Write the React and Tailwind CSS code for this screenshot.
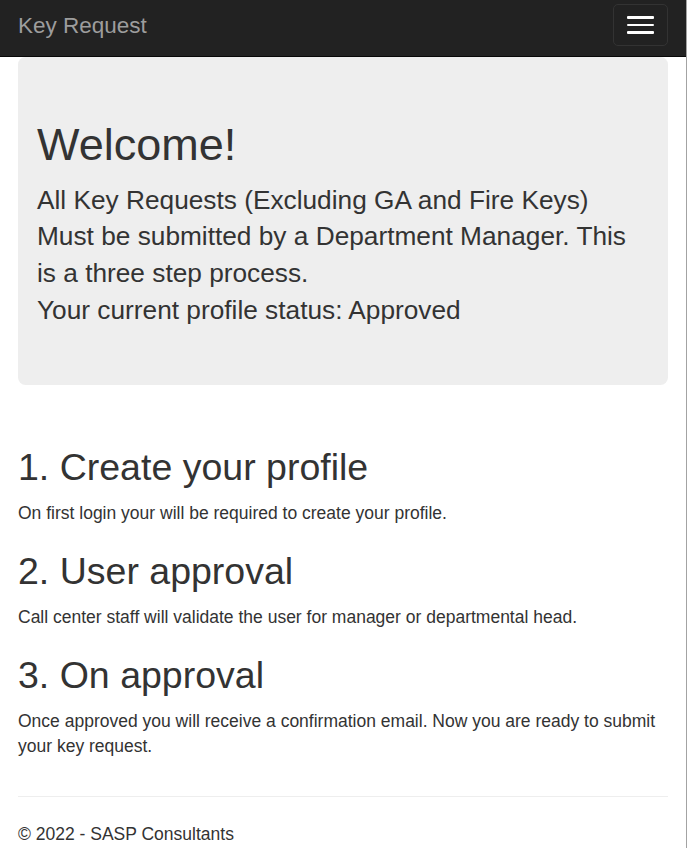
import React from "react";

const steps = [
    { title: "1. Create your profile", text: "On first login your will be required to create your profile." },
    { title: "2. User approval", text: "Call center staff will validate the user for manager or departmental head." },
    { title: "3. On approval", text: "Once approved you will receive a confirmation email. Now you are ready to submit your key request." },
];

function App() {
    return (
        <div className="min-h-screen w-[687px] bg-white text-[#333] border-r border-[#a3a3a3] font-['Liberation_Sans',Arial,sans-serif]">
            <nav className="h-[57px] bg-[#222] border-b border-[#080808] flex items-start justify-between pl-[18px] pr-[18px]">
                <a href="#" className="mt-[12.5px] text-[22.5px] leading-[25px] text-[#9d9d9d]">Key Request</a>
                <button className="mt-[4px] w-[55px] h-[42px] border border-[#333] rounded-[5px] flex flex-col items-center justify-center gap-[5px]">
                    <span className="block w-[27.5px] h-[2.5px] bg-white rounded-[1px]"></span>
                    <span className="block w-[27.5px] h-[2.5px] bg-white rounded-[1px]"></span>
                    <span className="block w-[27.5px] h-[2.5px] bg-white rounded-[1px]"></span>
                </button>
            </nav>

            <div className="px-[18px]">
                <div className="bg-[#eee] rounded-[7.5px] px-[19px] pt-[37.5px] pb-[37.5px] mb-[37.5px]">
                    <h1 className="mt-[25px] mb-[12.5px] text-[45px] leading-[1.1]">Welcome!</h1>
                    <p className="mb-[18.75px] text-[26.25px] leading-[36.75px]">
                        All Key Requests (Excluding GA and Fire Keys) Must be submitted by a Department Manager. This is a three step process.
                        <br />
                        Your current profile status: Approved
                    </p>
                </div>

                <div className="flow-root">
                    {steps.map((s) => (
                        <div key={s.title}>
                            <h2 className="mt-[25px] mb-[12.5px] text-[37.5px] leading-[1.1]">{s.title}</h2>
                            <p className="mb-[12.5px] text-[17.5px] leading-[25px]">{s.text}</p>
                        </div>
                    ))}
                </div>

                <hr className="mt-[25px] mb-[25px] border-t border-[#eee]" />
                <footer>
                    <p className="text-[17.5px] leading-[25px]">&copy; 2022 - SASP Consultants</p>
                </footer>
            </div>
        </div>
    );
}

export default App;
